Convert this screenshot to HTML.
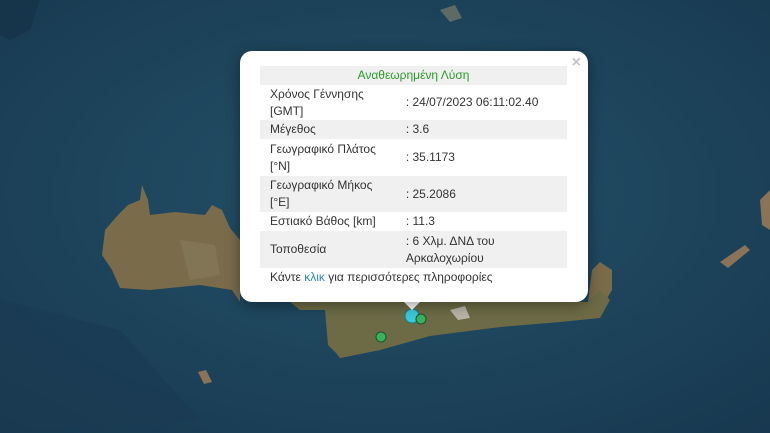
<!DOCTYPE html>
<html><head><meta charset="utf-8"><style>
html,body{margin:0;padding:0;width:770px;height:433px;overflow:hidden;background:#1f4760;font-family:"Liberation Sans","DejaVu Sans",sans-serif;}
#map{position:absolute;left:0;top:0}
.pop{position:absolute;left:240px;top:51px;width:348px;height:251px;background:#fff;border-radius:12px;box-shadow:0 3px 14px rgba(0,0,0,.4);}
.tip{position:absolute;left:403px;top:301px;width:0;height:0;border-left:9px solid transparent;border-right:9px solid transparent;border-top:9px solid #fff;}
.x{position:absolute;right:7px;top:3px;color:#c3c3c3;font-size:16px;font-weight:bold;}
table{position:absolute;left:20px;top:15px;width:307px;border-collapse:collapse;font-size:12px;color:#333;}
td{padding:0 10px;line-height:17px;vertical-align:middle}
tr.g td{background:#f0f0f0}
td.v{padding-left:4px}
.h td{text-align:center;color:#2a9b2a;height:19px}
.f{position:absolute;left:30px;top:219px;font-size:12px;color:#333}
.f span{color:#2a8ab5}
</style></head><body>
<svg id="map" width="770" height="433" viewBox="0 0 770 433">
<defs><radialGradient id="s" cx="0.5" cy="0.45" r="0.75"><stop offset="0" stop-color="#245169"/><stop offset="1" stop-color="#17384f"/></radialGradient></defs>
<rect width="770" height="433" fill="url(#s)"/>
<path d="M0 0 L40 0 L30 30 L10 40 L0 35Z" fill="#16344a"/>
<path d="M0 300 L120 330 L200 420 L0 433Z" fill="#1a3b52" opacity=".6"/>
<path d="M105 230 L118 215 L128 205 L140 200 L142 185 L148 200 L150 215 L175 212 L205 215 L212 205 L222 210 L230 228 L240 240 L240 302 L290 302 L290 300 L330 305 L330 345 L340 358 L380 350 L420 336 L470 330 L520 325 L570 320 L600 310 L612 290 L612 270 L600 262 L592 270 L588 302 L240 302 L232 290 L200 285 L150 290 L120 288 L112 270 L102 255Z" fill="#7a6b4a"/>
<path d="M290 302 L588 302 L600 290 L610 300 L600 318 L560 322 L500 327 L430 336 L380 350 L340 357 L328 345 L325 310 L300 310Z" fill="#6c6b45"/>
<path d="M180 240 L215 245 L220 275 L190 280Z" fill="#85795b" opacity=".7"/>
<path d="M450 310 L465 306 L470 318 L458 320Z" fill="#b8b4a8"/>
<path d="M720 262 L745 245 L750 250 L728 268Z" fill="#8a7356"/>
<path d="M760 200 L770 190 L770 230 L762 225Z" fill="#8a7356"/>
<path d="M198 372 L206 370 L212 382 L204 384Z" fill="#8a7356"/>
<path d="M440 10 L455 5 L462 18 L450 22Z" fill="#5f6a66"/>
<circle cx="412" cy="316" r="7" fill="#3cc8d8" stroke="#1a7a8a" stroke-width="1"/>
<circle cx="421" cy="319" r="5" fill="#3db05e" stroke="#145a2e" stroke-width="1"/>
<circle cx="381" cy="337" r="5" fill="#3db05e" stroke="#145a2e" stroke-width="1"/>
</svg>
<div class="tip"></div>
<div class="pop">
<div class="x">×</div>
<table>
<tr class="g h"><td colspan="2">Αναθεωρημένη Λύση</td></tr>
<tr><td style="height:35px">Χρόνος Γέννησης<br>[GMT]</td><td class="v">: 24/07/2023 06:11:02.40</td></tr>
<tr class="g"><td style="height:19px">Μέγεθος</td><td class="v">: 3.6</td></tr>
<tr><td style="height:37px">Γεωγραφικό Πλάτος<br>[°N]</td><td class="v">: 35.1173</td></tr>
<tr class="g"><td style="height:36px">Γεωγραφικό Μήκος<br>[°E]</td><td class="v">: 25.2086</td></tr>
<tr><td style="height:19px">Εστιακό Βάθος [km]</td><td class="v">: 11.3</td></tr>
<tr class="g"><td style="height:37px">Τοποθεσία</td><td class="v">: 6 Χλμ. ΔΝΔ του<br>Αρκαλοχωρίου</td></tr>
</table>
<div class="f">Κάντε <span>κλικ</span> για περισσότερες πληροφορίες</div>
</div>
</body></html>
